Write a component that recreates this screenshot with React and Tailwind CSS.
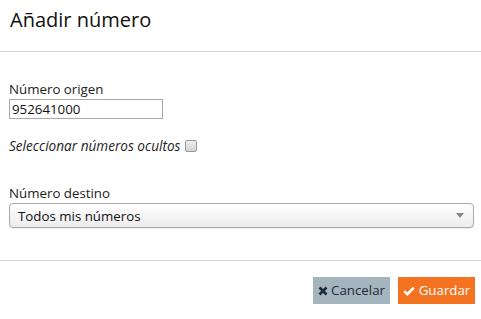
import React from 'react';

const font = { fontFamily: '"Segoe UI", "Open Sans", "Noto Sans", sans-serif' };

const App = () => {
    return (
        <div className="w-[481px] h-[319px] bg-white text-[#222]" style={font}>
            {/* Cabecera */}
            <header className="h-[52px] border-b border-[#cfd6db] px-[10px] pt-[6px]">
                <h1 className="text-[20px] leading-[28px] font-medium text-[#111]">Añadir número</h1>
            </header>

            {/* Formulario */}
            <div className="h-[209px] border-b border-[#cfd6db] px-[9px] pt-[28px]">
                <label className="block text-[13.3px] leading-[18px] text-[#222]">Número origen</label>
                <input
                    type="text"
                    defaultValue="952641000"
                    className="mt-[1px] block w-[154px] h-[20px] border border-[#a9a9a9] px-[2px] text-[13.3px] leading-[18px] text-[#111] outline-none"
                />
                <div className="mt-[18px] flex items-center gap-[5px]">
                    <span className="italic text-[13.6px] leading-[18px] text-[#222]">Seleccionar números ocultos</span>
                    <span className="inline-block w-[12px] h-[12px] rounded-[2px] border border-[#9a9a9a] bg-gradient-to-b from-[#eeeeee] to-[#d4d4d4]" />
                </div>
                <label className="mt-[29px] block text-[13.3px] leading-[18px] text-[#222]">Número destino</label>
                <div className="mt-[1px] flex items-center justify-between h-[25px] w-[465px] rounded-[4px] border border-[#aaaaaa] bg-gradient-to-b from-white to-[#ececec] pl-[8px] pr-[8px] shadow-[0_1px_1px_rgba(0,0,0,0.08)]">
                    <span className="text-[13.3px] leading-[18px] text-[#111]">Todos mis números</span>
                    <svg width="8" height="6" viewBox="0 0 8 6" className="mr-[1px]">
                        <path d="M0 0 L8 0 L4 5 Z" fill="#888" />
                    </svg>
                </div>
            </div>

            {/* Pie */}
            <footer className="flex justify-end gap-[8px] pt-[16px] pr-[6px]">
                <button className="flex items-center gap-[3px] h-[27px] w-[77px] justify-center bg-[#a5b5bf] text-[13.3px] text-[#1d2a33]">
                    <svg width="10" height="10" viewBox="0 0 10 10">
                        <path d="M1.5 1.5 L8.5 8.5 M8.5 1.5 L1.5 8.5" stroke="#1d2a33" strokeWidth="2.6" strokeLinecap="butt" />
                    </svg>
                    Cancelar
                </button>
                <button className="flex items-center gap-[4px] h-[27px] w-[77px] justify-center bg-[#f47321] text-[13.3px] text-white">
                    <svg width="12" height="10" viewBox="0 0 12 10">
                        <path d="M1.2 5.2 L4.4 8.2 L10.8 1.6" stroke="#fff" strokeWidth="2.4" fill="none" />
                    </svg>
                    Guardar
                </button>
            </footer>
        </div>
    );
};

export default App;
